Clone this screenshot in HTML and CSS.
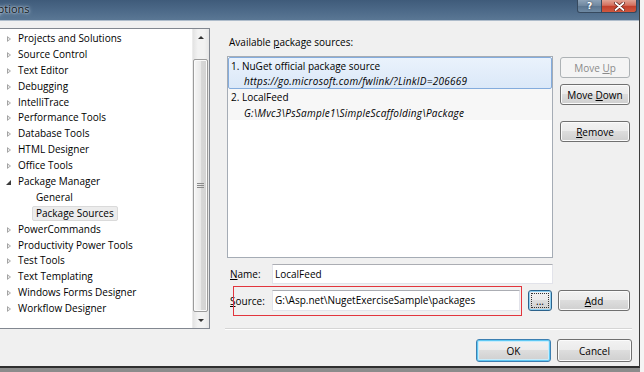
FILE: index.html
```html
<!DOCTYPE html>
<html lang="en">
<head>
    <meta charset="UTF-8">
    <title>Options</title>
    <link rel="stylesheet" href="styles.css">
</head>
<body>
    <div class="window">
        <div class="titlebar">
            <span class="title">Options</span>
            <div class="caption-buttons">
                <span class="cap-btn help">?</span>
                <span class="cap-btn close">
                    <svg width="11" height="9" viewBox="0 0 11 9">
                        <path d="M1.5 1 L9.5 8 M9.5 1 L1.5 8" stroke="#5a1a14" stroke-width="3.2" stroke-linecap="round"/>
                        <path d="M1.5 1 L9.5 8 M9.5 1 L1.5 8" stroke="#fff" stroke-width="1.8" stroke-linecap="round"/>
                    </svg>
                </span>
            </div>
        </div>

        <div class="dialog">
            <div class="main">
                <div class="tree">
                    <ul class="tree-list">
                        <li class="tree-item"><span class="expander"></span>Projects and Solutions</li>
                        <li class="tree-item"><span class="expander"></span>Source Control</li>
                        <li class="tree-item"><span class="expander"></span>Text Editor</li>
                        <li class="tree-item"><span class="expander"></span>Debugging</li>
                        <li class="tree-item"><span class="expander"></span>IntelliTrace</li>
                        <li class="tree-item"><span class="expander"></span>Performance Tools</li>
                        <li class="tree-item"><span class="expander"></span>Database Tools</li>
                        <li class="tree-item"><span class="expander"></span>HTML Designer</li>
                        <li class="tree-item"><span class="expander"></span>Office Tools</li>
                        <li class="tree-item open"><span class="expander"></span>Package Manager</li>
                        <li class="tree-item child"><span class="tree-label">General</span></li>
                        <li class="tree-item child"><span class="tree-label selected">Package Sources</span></li>
                        <li class="tree-item"><span class="expander"></span>PowerCommands</li>
                        <li class="tree-item"><span class="expander"></span>Productivity Power Tools</li>
                        <li class="tree-item"><span class="expander"></span>Test Tools</li>
                        <li class="tree-item"><span class="expander"></span>Text Templating</li>
                        <li class="tree-item"><span class="expander"></span>Windows Forms Designer</li>
                        <li class="tree-item"><span class="expander"></span>Workflow Designer</li>
                    </ul>
                    <div class="scrollbar">
                        <div class="sb-arrow"><span class="glyph-up"></span></div>
                        <div class="sb-track">
                            <div class="sb-thumb">
                                <svg width="7" height="5" viewBox="0 0 7 5">
                                    <path d="M0 0.5 H7 M0 2.5 H7 M0 4.5 H7" stroke="#8a8a8a" stroke-width="1"/>
                                </svg>
                            </div>
                        </div>
                        <div class="sb-arrow"><span class="glyph-down"></span></div>
                    </div>
                </div>

                <div class="panel">
                    <div class="panel-label">Available <u>p</u>ackage sources:</div>
                    <div class="sources">
                        <div class="listbox">
                            <div class="source-item selected">
                                <div class="source-name">1. NuGet official package source</div>
                                <div class="source-url">https://go.microsoft.com/fwlink/?LinkID=206669</div>
                            </div>
                            <div class="source-item alt">
                                <div class="source-name">2. LocalFeed</div>
                                <div class="source-url">G:\Mvc3\PsSample1\SimpleScaffolding\Package</div>
                            </div>
                        </div>
                        <div class="side-buttons">
                            <button class="btn disabled">Move <u>U</u>p</button>
                            <button class="btn">Move <u>D</u>own</button>
                            <button class="btn remove"><u>R</u>emove</button>
                        </div>
                    </div>

                    <div class="field-row">
                        <span class="field-label"><u>N</u>ame:</span>
                        <div class="textbox name-box">LocalFeed</div>
                    </div>
                    <div class="field-row source-row">
                        <span class="field-label"><u>S</u>ource:</span>
                        <div class="textbox source-box">G:\Asp.net\NugetExerciseSample\packages</div>
                        <button class="btn browse">...</button>
                        <button class="btn add"><u>A</u>dd</button>
                        <div class="highlight"></div>
                    </div>

                    <div class="separator"></div>
                </div>
            </div>

            <div class="footer">
                <button class="btn default">OK</button>
                <button class="btn">Cancel</button>
            </div>
        </div>
    </div>
</body>
</html>
```

FILE: styles.css
```css
html, body {
    margin: 0;
    padding: 0;
}
body {
    width: 644px;
    height: 372px;
    overflow: hidden;
    background-color: #f4f4f4;
    font-family: "Open Sans", "Noto Sans", sans-serif;
    font-size: 10px;
    color: #000;
}
.window {
    width: 639px;
    height: 366px;
    border-right: 1px solid #3d3d3d;
    border-bottom: 2px solid #2f2f2f;
    background-color: #f0f0f0;
    display: flex;
    flex-direction: column;
    box-shadow: 0 4px 0 #8c8c8c;
}

/* title bar */
.titlebar {
    height: 20px;
    flex-shrink: 0;
    display: flex;
    justify-content: space-between;
    align-items: flex-start;
    background: linear-gradient(180deg, #3f5b7a 0%, #4d6a89 55%, #5a7794 100%);
    border-bottom: 1px solid #aebccb;
    overflow: hidden;
}
.title {
    margin-left: -11px;
    line-height: 18px;
    font-size: 11px;
    color: #101820;
    text-shadow: 0 0 4px #c9d6e4, 0 0 2px #dfe8f1;
}
.caption-buttons {
    display: flex;
    margin-right: 2px;
}
.cap-btn {
    height: 13px;
    display: flex;
    align-items: center;
    justify-content: center;
    box-sizing: border-box;
    border: 1px solid #36495e;
    border-top: none;
}
.help {
    width: 25px;
    border-radius: 0 0 0 3px;
    background: linear-gradient(180deg, #8ea3b8 0%, #6f879f 50%, #5c7690 51%, #6e89a3 100%);
    color: #fff;
    font-family: "DejaVu Sans", sans-serif;
    font-size: 9px;
    font-weight: bold;
    text-shadow: 0 0 2px #213345;
}
.close {
    width: 35px;
    border-left: none;
    border-radius: 0 0 3px 0;
    background: linear-gradient(180deg, #e2a495 0%, #d5705e 45%, #c33f2b 50%, #d0583f 100%);
}

/* dialog body */
.dialog {
    flex: 1;
    display: flex;
    flex-direction: column;
}
.main {
    display: flex;
    padding: 7px 7px 0 0;
}

/* tree view */
.tree {
    margin-left: -1px;
    width: 211px;
    height: 301px;
    box-sizing: border-box;
    border: 1px solid #828790;
    background-color: #fff;
    display: flex;
}
.tree-list {
    flex: 1;
    list-style: none;
    margin: 0;
    padding: 2px 0 0 0;
}
.tree-item {
    height: 15.9px;
    line-height: 15.9px;
    display: flex;
    align-items: center;
    padding-left: 6px;
    white-space: nowrap;
}
.expander {
    position: relative;
    width: 12px;
    height: 8px;
    flex-shrink: 0;
}
.expander::before {
    content: "";
    position: absolute;
    left: 1px;
    top: 1px;
    border-left: 4px solid #a3a3a3;
    border-top: 3.5px solid transparent;
    border-bottom: 3.5px solid transparent;
}
.expander::after {
    content: "";
    position: absolute;
    left: 2px;
    top: 3px;
    border-left: 2px solid #fff;
    border-top: 1.5px solid transparent;
    border-bottom: 1.5px solid transparent;
}
.tree-item.open .expander::before {
    left: 0;
    top: 2px;
    border-left: 5px solid transparent;
    border-top: none;
    border-bottom: 5px solid #3b3b3b;
}
.tree-item.open .expander::after {
    display: none;
}
.tree-item.child {
    padding-left: 32px;
}
.tree-label {
    padding: 0 3px;
    line-height: 13px;
    border: 1px solid transparent;
    border-radius: 2px;
}
.tree-label.selected {
    background-color: #ececec;
    border-color: #dadada;
}

/* scrollbar */
.scrollbar {
    width: 16px;
    display: flex;
    flex-direction: column;
    background: linear-gradient(90deg, #e3e3e3 0%, #f2f2f2 30%, #f2f2f2 70%, #e6e6e6 100%);
    border-left: 1px solid #ececec;
}
.sb-arrow {
    height: 16px;
    display: flex;
    align-items: center;
    justify-content: center;
}
.glyph-up {
    border-bottom: 3px solid #333;
    border-left: 3px solid transparent;
    border-right: 3px solid transparent;
}
.glyph-down {
    border-top: 3px solid #333;
    border-left: 3px solid transparent;
    border-right: 3px solid transparent;
}
.sb-track {
    flex: 1;
    display: flex;
    padding: 14px 1px 0 0;
}
.sb-thumb {
    flex: 1;
    display: flex;
    align-items: center;
    justify-content: center;
    border: 1px solid #9b9b9b;
    border-radius: 2px;
    background: linear-gradient(90deg, #f6f6f6 0%, #e9e9e9 50%, #d8d8d8 51%, #d2d2d2 100%);
    box-shadow: inset 0 0 0 1px #fafafa;
}

/* right panel */
.panel {
    flex: 1;
    margin-left: 17px;
}
.panel-label {
    padding: 6px 0 0 2px;
    line-height: 16px;
}
.sources {
    display: flex;
    margin-top: 6px;
}
.listbox {
    width: 326px;
    height: 202px;
    box-sizing: border-box;
    border: 1px solid #a5acb5;
    background-color: #fff;
}
.source-item {
    padding: 0.5px 0 0 2px;
    line-height: 15.5px;
    height: 31.5px;
    box-sizing: border-box;
    border: 1px solid transparent;
    white-space: nowrap;
}
.source-item.selected {
    border-color: #84acdd;
    border-radius: 2px;
    background: linear-gradient(180deg, #eaf2fc 0%, #dbe8f8 100%);
}
.source-item.alt {
    background-color: #f7f7f7;
}
.source-url {
    padding-left: 13px;
    font-style: italic;
    letter-spacing: 0.25px;
}
.side-buttons {
    display: flex;
    flex-direction: column;
    margin-left: 7px;
    padding-top: 1px;
    gap: 6px;
}
.side-buttons .btn {
    width: 70px;
    height: 21px;
}
.side-buttons .remove {
    margin-top: 10px;
}

/* buttons */
.btn {
    font-family: inherit;
    font-size: 10px;
    color: #000;
    padding: 0;
    box-sizing: border-box;
    border: 1px solid #707070;
    border-radius: 3px;
    background: linear-gradient(180deg, #f2f2f2 0%, #ebebeb 49%, #dddddd 50%, #cfcfcf 100%);
    box-shadow: inset 0 0 0 1px #fbfbfb;
    cursor: pointer;
}
.btn.disabled {
    color: #8a8a8a;
    border-color: #adb2b5;
    background: #f4f4f4;
    box-shadow: none;
}
.btn.default {
    border-color: #3c7fb1;
    box-shadow: inset 0 0 0 1px #5ec8f3, inset 0 0 0 2px #c9ecfb;
}

/* name / source fields */
.field-row {
    display: flex;
    align-items: center;
    margin-top: 6px;
}
.field-label {
    width: 42px;
    padding-left: 3px;
    flex-shrink: 0;
}
.textbox {
    height: 20px;
    line-height: 18px;
    box-sizing: border-box;
    padding-left: 2px;
    background-color: #fff;
    border: 1px solid #e2e3ea;
    border-top-color: #abadb3;
    white-space: nowrap;
}
.name-box {
    width: 281px;
}
.source-row {
    position: relative;
}
.source-box {
    width: 248px;
    height: 21px;
    line-height: 19px;
}
.browse {
    width: 24px;
    height: 21px;
    margin-left: 8px;
    border-color: #2c628b;
    box-shadow: inset 0 0 0 1px #8fd0f2;
    outline: 1px dotted #333;
    outline-offset: -4px;
    line-height: 12px;
}
.add {
    width: 72px;
    height: 21px;
    margin-left: 6px;
}
.highlight {
    position: absolute;
    left: 6px;
    top: -4px;
    width: 289px;
    height: 30px;
    box-sizing: border-box;
    border: 1px solid #e2353d;
}
.separator {
    margin: 17px 0 0 -2px;
    height: 1px;
    background-color: #d5d5d5;
    border-bottom: 1px solid #fff;
}

/* footer */
.footer {
    display: flex;
    justify-content: flex-end;
    gap: 6px;
    padding: 9px 7px 0 0;
}
.footer .btn {
    width: 75px;
    height: 23px;
}
```
